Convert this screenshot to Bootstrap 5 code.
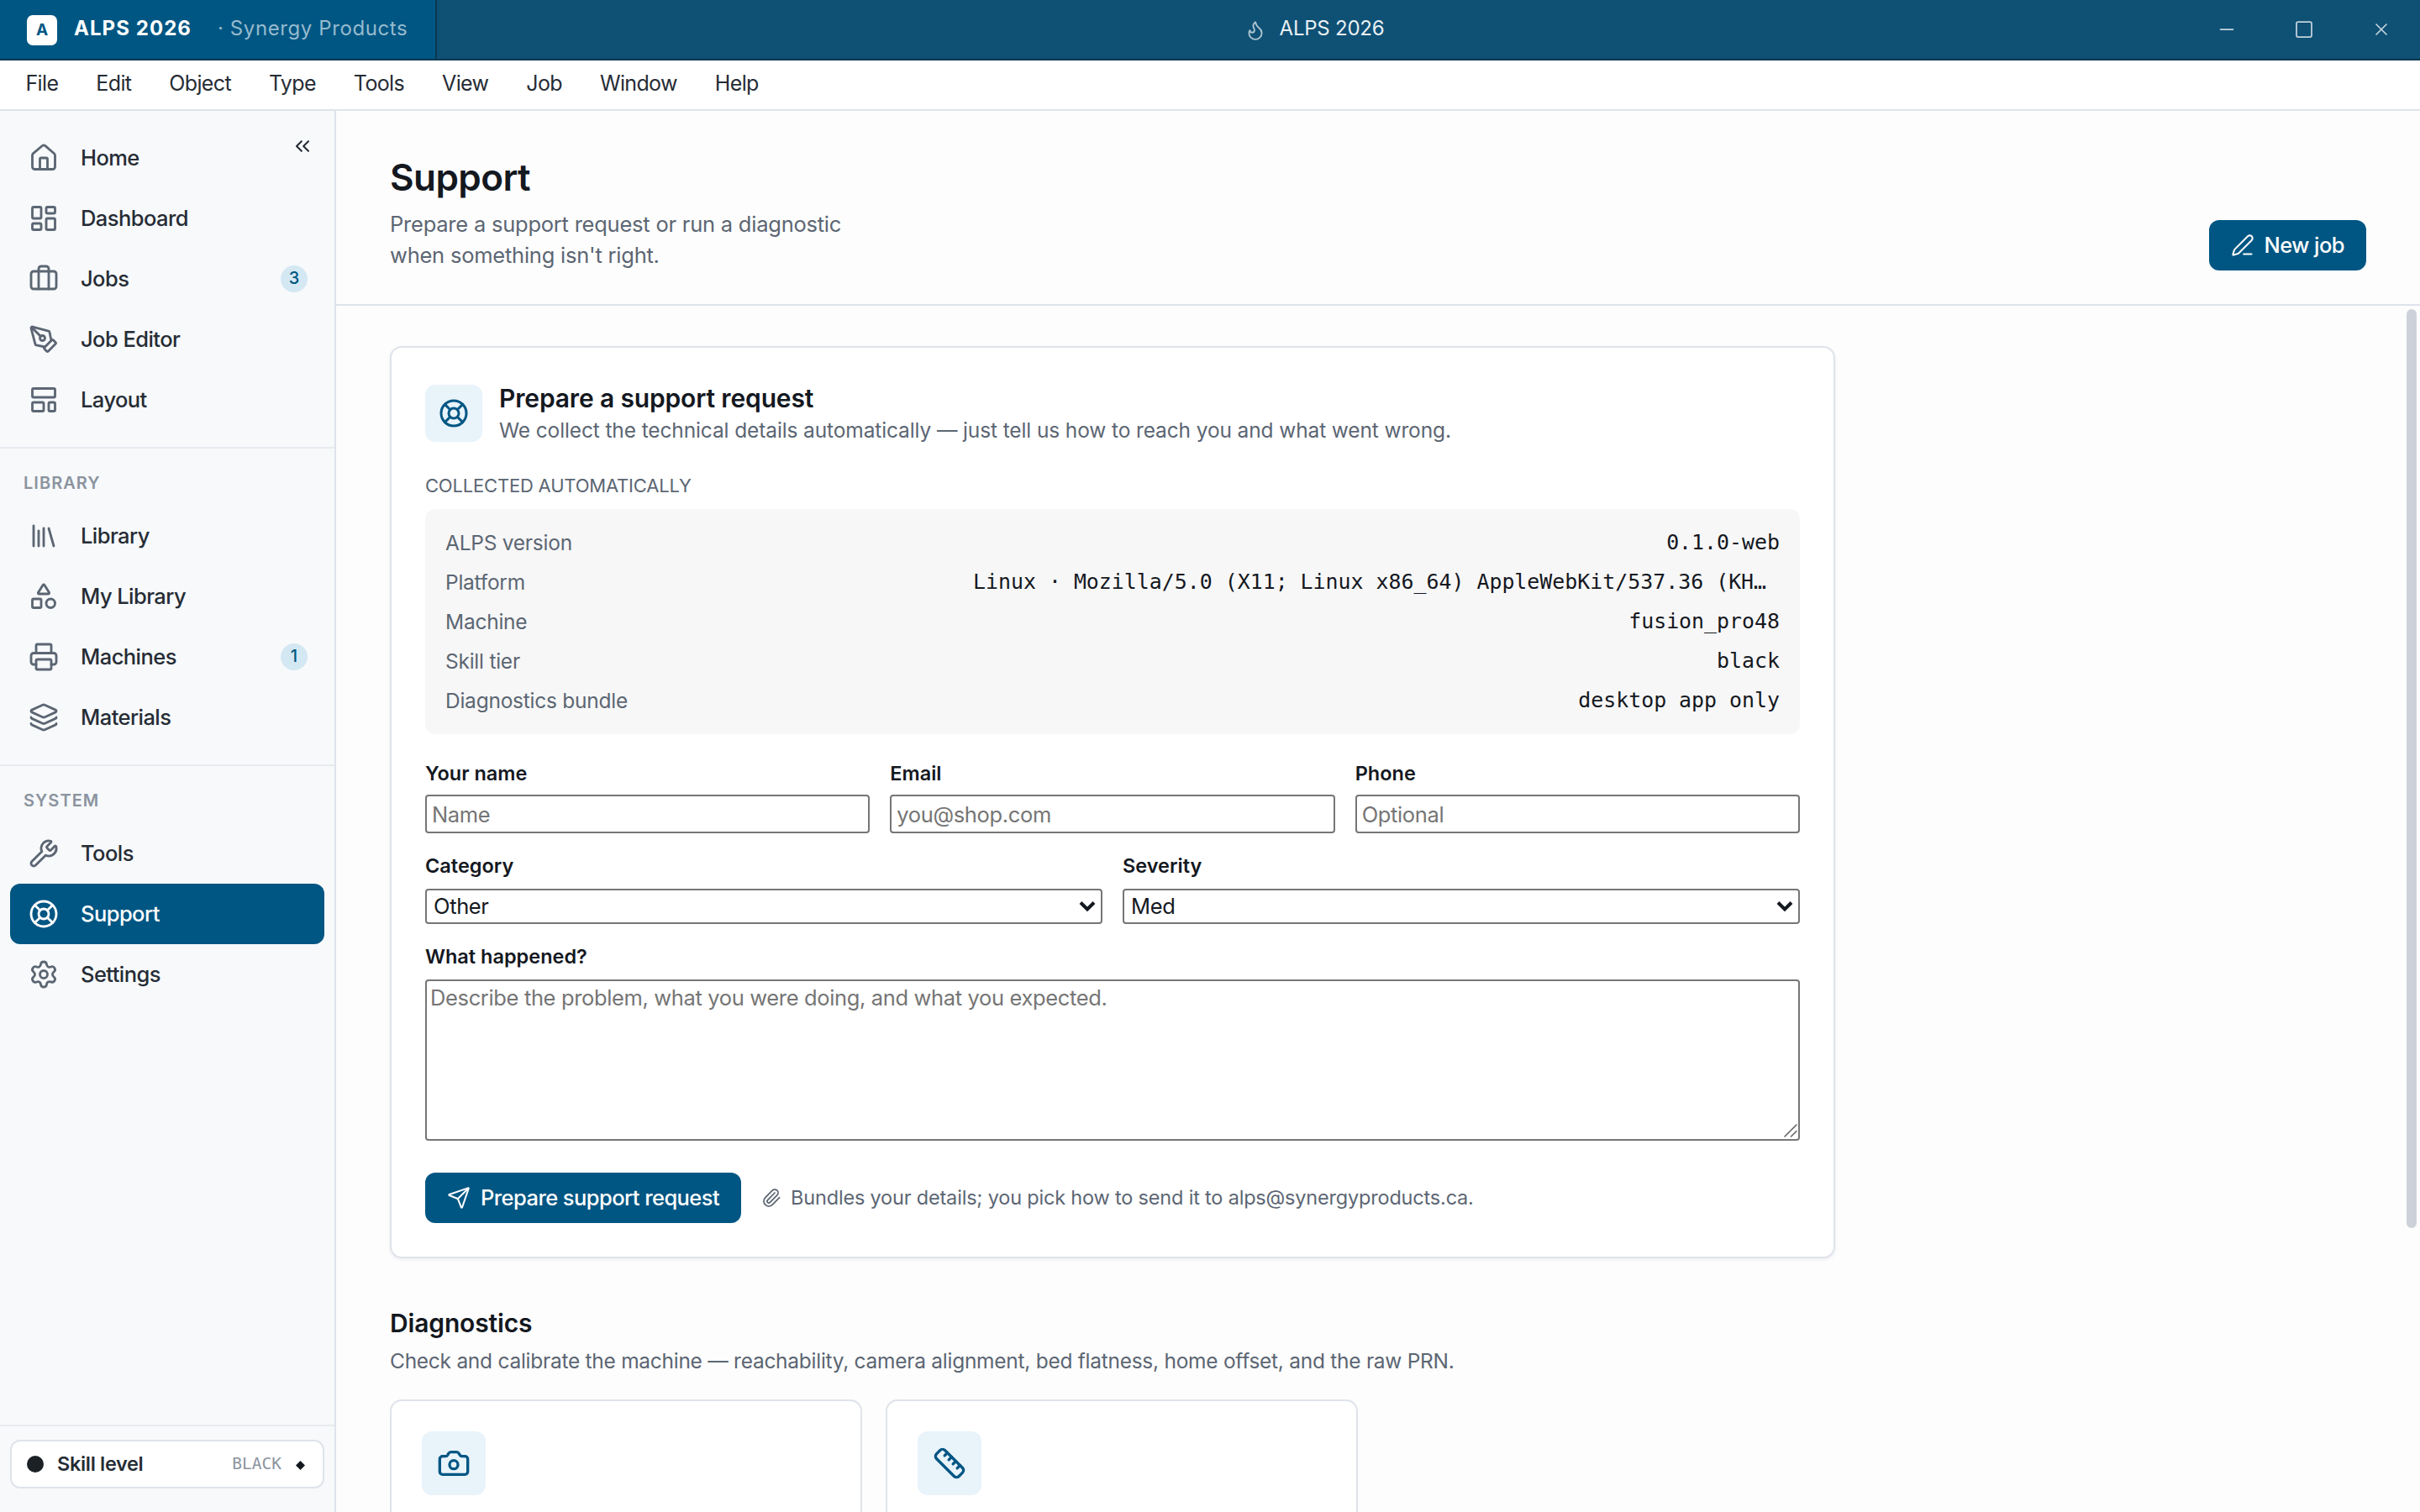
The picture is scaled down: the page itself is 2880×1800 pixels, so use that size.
<!DOCTYPE html>
<html lang="en">
<head>
<meta charset="utf-8">
<meta name="viewport" content="width=device-width, initial-scale=1">
<title>ALPS 2026</title>
<link href="https://cdn.jsdelivr.net/npm/bootstrap@5.3.0/dist/css/bootstrap.min.css" rel="stylesheet">
<style>
:root{--brand:#005683;--bar:#0f5075;--bar-edge:#0a3850;--ink:#14181f;--ink-2:#262c35;--muted-ink:#5c6673;--faint:#8b949e;--line:#dfe3ea;--line-soft:#e8ebef;--tint:#e8f3fa;--mono:"DejaVu Sans Mono",monospace}
body{font-family:Inter,sans-serif;font-size:25.5px;line-height:36px;letter-spacing:-.009em;color:var(--ink);background:#fdfdfd}
svg{fill:none;stroke:currentColor;stroke-width:1.75;stroke-linecap:round;stroke-linejoin:round;flex:none}
.i24{width:24px;height:24px}.i26{width:26px;height:26px}.i28{width:28px;height:28px}.i36{width:36px;height:36px}.i40{width:40px;height:40px}

.titlebar{height:72px;background:var(--bar);border-bottom:2px solid var(--bar-edge);color:#e9f0f4;font-size:24px}
.brand{width:520px;padding-left:32px;padding-bottom:1px;background:var(--brand);border-right:2px solid var(--bar-edge)}
.brand-mark{width:36px;height:36px;border-radius:7px;background:#fff;color:var(--brand);font-size:19px;margin-right:20px;margin-top:2px}
.brand-name{letter-spacing:.044em;color:#fff;margin-right:31px;margin-top:-2px}
.brand-sub{letter-spacing:.025em;color:#96bace;margin-top:-2px}
.win-title{gap:16px;padding-bottom:3px}
.win-title svg{color:#a9c2d0;position:relative;top:2px}
.win-btn{width:92px;color:#c3d3dd}
.win-side{width:276px}
.menubar{height:60px;background:#fff;border-bottom:2px solid var(--line);padding:0 8px;font-size:25px;letter-spacing:-.026em;color:var(--ink-2)}
.menubar a{padding:0 22.5px;color:inherit;text-decoration:none;line-height:54px}

.side{width:400px;background:#f7f9fb;border-right:2px solid var(--line);position:relative}
.nav-group{padding:20px 12px}
.nav-group+.nav-group{border-top:2px solid var(--line-soft);padding-top:22px}
.nav-head{font-size:20px;font-weight:600;letter-spacing:.052em;color:var(--faint);padding-left:16px;height:46px;line-height:38px}
.nav-row{height:72px;padding:0 20px 0 22px;border-radius:12px;color:var(--ink-2);font-weight:500;letter-spacing:-.022em;text-decoration:none;gap:26px}
.nav-row svg{color:var(--muted-ink);stroke-width:1.9}
.nav-row.on{background:var(--brand);color:#fff}
.nav-row.on svg{color:#fff}
.count{min-width:32px;height:32px;border-radius:16px;background:#d3e8f3;color:var(--brand);font-size:20px;line-height:31px;text-align:center;letter-spacing:0}
.fold{position:absolute;top:28px;right:24px;width:28px;height:28px;color:var(--ink-2)}
.side-foot{border-top:2px solid var(--line-soft);padding:16px 12px 28px;height:104px}
.skill{height:58px;border:2px solid var(--line);border-radius:12px;background:#fff;padding:0 21px 0 18px;font-size:23.5px;letter-spacing:-.014em;color:var(--ink-2)}
.dot{width:20px;height:20px;border-radius:50%;background:#1c2126;margin-right:16px}
.tier{font-family:var(--mono);font-size:19.5px;letter-spacing:0;color:var(--faint);margin-right:17px}
.gem{width:11px;height:11px;fill:var(--ink);stroke:none;margin-top:3px}

.page-head{height:232px;padding:52px 64px 40px;border-bottom:2px solid var(--line)}
.page-head h1{font-size:44px;line-height:52px;font-weight:600;letter-spacing:-.013em;margin:0 0 12px}
.page-head p{color:var(--muted-ink);line-height:36.5px;margin:0;width:560px}
.act{height:60px;border:0;border-radius:12px;background:var(--brand);color:#fff;font-size:25.5px;font-weight:500;letter-spacing:-.022em;padding:0 26px;gap:12px}
.page-body{padding:48px 64px 0;position:relative}
.thumb{position:absolute;right:4px;top:4px;width:12px;height:1094px;border-radius:6px;background:#cdd2da}

.panel{width:1720px;background:#fff;border:2px solid var(--line);border-radius:14px;padding:40px;box-shadow:0 2px 4px rgba(20,24,31,.06)}
.tile{width:68px;height:68px;border-radius:12px;background:var(--tint);color:var(--brand)}
.tile svg{stroke-width:2}
.tile.big{width:76px;height:76px}
h2{font-size:30px;line-height:40px;font-weight:600;letter-spacing:-.005em;margin:0}
.note{font-size:24.5px;letter-spacing:-.005em;color:var(--muted-ink)}
.over{font-size:22px;line-height:32px;letter-spacing:-.009em;color:var(--muted-ink);margin:32px 0 12px}
.facts{background:#f7f7f7;border-radius:12px;padding:16px 24px;height:268px;font-size:24.5px;margin:0 0 30px}
.facts div{height:47px}
.facts dt{font-weight:400;color:var(--muted-ink);letter-spacing:-.01em}
.facts dd{margin:0;font-family:var(--mono);font-size:24.9px;letter-spacing:0}
.facts .long{width:960px}

.fields{gap:24px}
.fields+.fields,.fields+.block{margin-top:22px}
.cap{display:block;font-size:23.5px;font-weight:600;letter-spacing:0;line-height:34px;margin-bottom:10px}
.cap.tight{margin-bottom:8px}
.box,.box:focus{display:block;width:100%;border:2px solid #767676;border-radius:4px;background-color:#fff;color:var(--ink);font-size:25.5px;letter-spacing:-.014em;line-height:36px;padding:2px 6px;outline:0;box-shadow:none}
.box::placeholder{color:#757575;opacity:1}
input.box{height:46px}
select.box{height:42px;padding:0 8px;appearance:none;-webkit-appearance:none}
textarea.box{height:192px;padding:2px 4px;resize:none}
.drop{position:absolute;right:8px;top:14px;width:20px;height:14px;color:var(--ink);stroke-width:4;stroke-linecap:butt;stroke-linejoin:miter}
.grip{position:absolute;right:2px;bottom:3px;width:18px;height:18px;color:#666;stroke-width:1.6}
.send-row{margin-top:38px;gap:24px}
.hint{font-size:23.5px;letter-spacing:-.008em;color:var(--muted-ink);gap:11px}

.diag-head{margin-top:57px}
.diag-head p{margin:7px 0 28px;font-size:24.5px;letter-spacing:-.011em;color:var(--muted-ink)}
.diag-list{gap:28px}
.diag{width:562px;height:260px;background:#fff;border:2px solid var(--line);border-radius:14px;padding:36px}
</style>
<script src="https://cdn.jsdelivr.net/npm/bootstrap@5.3.0/dist/js/bootstrap.bundle.min.js"></script>
</head>
<body class="vh-100 overflow-hidden d-flex flex-column">

<svg class="d-none">
  <symbol id="buoy" viewBox="0 0 24 24"><circle cx="12" cy="12" r="10"/><path d="m4.93 4.93 4.24 4.24M14.83 9.17l4.24-4.24M14.83 14.83l4.24 4.24M9.17 14.83l-4.24 4.24"/><circle cx="12" cy="12" r="4"/></symbol>
</svg>

<header class="titlebar d-flex flex-shrink-0">
  <div class="brand d-flex align-items-center">
    <span class="brand-mark d-flex align-items-center justify-content-center fw-bold">A</span>
    <span class="brand-name fw-bold">ALPS 2026</span>
    <span class="brand-sub">· Synergy Products</span>
  </div>
  <div class="win-title flex-grow-1 d-flex align-items-center justify-content-center ps-1">
    <svg class="i26" viewBox="0 0 24 24"><path d="M8.5 14.5A2.5 2.5 0 0 0 11 12c0-1.38-.5-2-1-3-1.072-2.143-.224-4.054 2-6 .5 2.5 2 4.9 4 6.5 2 1.6 3 3.5 3 5.5a7 7 0 1 1-14 0c0-1.153.433-2.294 1-3a2.5 2.5 0 0 0 2.5 2.5z"/></svg>
    <span>ALPS 2026</span>
  </div>
  <div class="win-side d-flex justify-content-end">
    <span class="win-btn d-flex align-items-center justify-content-center"><svg class="i24" viewBox="0 0 24 24"><path d="M4.5 12h15"/></svg></span>
    <span class="win-btn d-flex align-items-center justify-content-center"><svg class="i24" viewBox="0 0 24 24"><rect x="3" y="3" width="18" height="18" rx="2"/></svg></span>
    <span class="win-btn d-flex align-items-center justify-content-center"><svg class="i24" viewBox="0 0 24 24"><path d="M18 6 6 18M6 6l12 12"/></svg></span>
  </div>
</header>

<nav class="menubar d-flex flex-shrink-0">
  <a href="#">File</a><a href="#">Edit</a><a href="#">Object</a><a href="#">Type</a><a href="#">Tools</a><a href="#">View</a><a href="#">Job</a><a href="#">Window</a><a href="#">Help</a>
</nav>

<div class="d-flex flex-grow-1 overflow-hidden">
  <aside class="side d-flex flex-column flex-shrink-0">
    <svg class="fold" viewBox="0 0 24 24"><path d="m11 17-5-5 5-5M18 17l-5-5 5-5"/></svg>
    <div class="nav-group">
      <a class="nav-row d-flex align-items-center" href="#"><svg class="i36" viewBox="0 0 24 24"><path d="M15 21v-8a1 1 0 0 0-1-1h-4a1 1 0 0 0-1 1v8"/><path d="M3 10a2 2 0 0 1 .709-1.528l7-5.999a2 2 0 0 1 2.582 0l7 5.999A2 2 0 0 1 21 10v9a2 2 0 0 1-2 2H5a2 2 0 0 1-2-2z"/></svg><span>Home</span></a>
      <a class="nav-row d-flex align-items-center" href="#"><svg class="i36" viewBox="0 0 24 24"><rect x="3" y="3" width="7" height="9" rx="1"/><rect x="14" y="3" width="7" height="5" rx="1"/><rect x="14" y="12" width="7" height="9" rx="1"/><rect x="3" y="16" width="7" height="5" rx="1"/></svg><span>Dashboard</span></a>
      <a class="nav-row d-flex align-items-center" href="#"><svg class="i36" viewBox="0 0 24 24"><path d="M16 20V4a2 2 0 0 0-2-2h-4a2 2 0 0 0-2 2v16"/><rect x="2" y="6" width="20" height="14" rx="2"/></svg><span>Jobs</span><span class="count ms-auto">3</span></a>
      <a class="nav-row d-flex align-items-center" href="#"><svg class="i36" viewBox="0 0 24 24"><path d="M15.707 21.293a1 1 0 0 1-1.414 0l-1.586-1.586a1 1 0 0 1 0-1.414l5.586-5.586a1 1 0 0 1 1.414 0l1.586 1.586a1 1 0 0 1 0 1.414z"/><path d="m18 13-1.375-6.874a1 1 0 0 0-.746-.776L3.235 2.028a1 1 0 0 0-1.207 1.207L5.35 15.879a1 1 0 0 0 .776.746L13 18M2.3 2.3l7.286 7.286"/><circle cx="11" cy="11" r="2"/></svg><span>Job Editor</span></a>
      <a class="nav-row d-flex align-items-center" href="#"><svg class="i36" viewBox="0 0 24 24"><rect x="3" y="3" width="18" height="7" rx="1"/><rect x="3" y="14" width="9" height="7" rx="1"/><rect x="16" y="14" width="5" height="7" rx="1"/></svg><span>Layout</span></a>
    </div>
    <div class="nav-group">
      <div class="nav-head">LIBRARY</div>
      <a class="nav-row d-flex align-items-center" href="#"><svg class="i36" viewBox="0 0 24 24"><path d="m16 6 4 14M12 6v14M8 8v12M4 4v16"/></svg><span>Library</span></a>
      <a class="nav-row d-flex align-items-center" href="#"><svg class="i36" viewBox="0 0 24 24"><path d="M8.3 10a.7.7 0 0 1-.626-1.079L11.4 3a.7.7 0 0 1 1.198-.043L16.3 8.9a.7.7 0 0 1-.572 1.1Z"/><rect x="3" y="14" width="7" height="7" rx="1"/><circle cx="17.5" cy="17.5" r="3.5"/></svg><span>My Library</span></a>
      <a class="nav-row d-flex align-items-center" href="#"><svg class="i36" viewBox="0 0 24 24"><path d="M6 18H4a2 2 0 0 1-2-2v-5a2 2 0 0 1 2-2h16a2 2 0 0 1 2 2v5a2 2 0 0 1-2 2h-2"/><path d="M6 9V3a1 1 0 0 1 1-1h10a1 1 0 0 1 1 1v6"/><rect x="6" y="14" width="12" height="8" rx="1"/></svg><span>Machines</span><span class="count ms-auto">1</span></a>
      <a class="nav-row d-flex align-items-center" href="#"><svg class="i36" viewBox="0 0 24 24"><path d="M12.83 2.18a2 2 0 0 0-1.66 0L2.6 6.08a1 1 0 0 0 0 1.83l8.58 3.91a2 2 0 0 0 1.66 0l8.58-3.9a1 1 0 0 0 0-1.83z"/><path d="M2 12a1 1 0 0 0 .58.91l8.6 3.91a2 2 0 0 0 1.65 0l8.58-3.9A1 1 0 0 0 22 12"/><path d="M2 17a1 1 0 0 0 .58.91l8.6 3.91a2 2 0 0 0 1.65 0l8.58-3.9A1 1 0 0 0 22 17"/></svg><span>Materials</span></a>
    </div>
    <div class="nav-group">
      <div class="nav-head">SYSTEM</div>
      <a class="nav-row d-flex align-items-center" href="#"><svg class="i36" viewBox="0 0 24 24"><path d="M14.7 6.3a1 1 0 0 0 0 1.4l1.6 1.6a1 1 0 0 0 1.4 0l3.106-3.105c.32-.322.863-.22.983.218a6 6 0 0 1-8.259 7.057l-7.91 7.91a1 1 0 0 1-2.999-3l7.91-7.91a6 6 0 0 1 7.057-8.259c.438.12.54.662.219.984z"/></svg><span>Tools</span></a>
      <a class="nav-row on d-flex align-items-center" href="#"><svg class="i36"><use href="#buoy"/></svg><span>Support</span></a>
      <a class="nav-row d-flex align-items-center" href="#"><svg class="i36" viewBox="0 0 24 24"><path d="M9.671 4.136a2.34 2.34 0 0 1 4.659 0 2.34 2.34 0 0 0 3.319 1.915 2.34 2.34 0 0 1 2.33 4.033 2.34 2.34 0 0 0 0 3.831 2.34 2.34 0 0 1-2.33 4.033 2.34 2.34 0 0 0-3.319 1.915 2.34 2.34 0 0 1-4.659 0 2.34 2.34 0 0 0-3.32-1.915 2.34 2.34 0 0 1-2.33-4.033 2.34 2.34 0 0 0 0-3.831A2.34 2.34 0 0 1 6.35 6.051a2.34 2.34 0 0 0 3.319-1.915"/><circle cx="12" cy="12" r="3"/></svg><span>Settings</span></a>
    </div>
    <div class="side-foot mt-auto">
      <div class="skill d-flex align-items-center">
        <span class="dot"></span><span class="fw-semibold">Skill level</span>
        <span class="tier ms-auto">BLACK</span><svg class="gem" viewBox="0 0 12 12"><path d="M6 0l6 6-6 6-6-6z"/></svg>
      </div>
    </div>
  </aside>

  <main class="flex-grow-1 d-flex flex-column overflow-hidden">
    <div class="page-head d-flex justify-content-between align-items-end flex-shrink-0">
      <div>
        <h1>Support</h1>
        <p>Prepare a support request or run a diagnostic<br>when something isn't right.</p>
      </div>
      <button class="act btn d-flex align-items-center" type="button"><svg class="i28" viewBox="0 0 24 24"><path d="M13 21h8"/><path d="M21.174 6.812a1 1 0 0 0-3.986-3.987L3.842 16.174a2 2 0 0 0-.5.83l-1.321 4.352a.5.5 0 0 0 .623.622l4.353-1.32a2 2 0 0 0 .83-.497z"/></svg>New job</button>
    </div>

    <div class="page-body flex-grow-1 overflow-hidden">
      <div class="thumb"></div>
      <section class="panel">
        <div class="d-flex align-items-center">
          <span class="tile d-flex align-items-center justify-content-center flex-shrink-0"><svg class="i36"><use href="#buoy"/></svg></span>
          <div class="ms-3 ps-1">
            <h2>Prepare a support request</h2>
            <div class="note">We collect the technical details automatically — just tell us how to reach you and what went wrong.</div>
          </div>
        </div>

        <div class="over">COLLECTED AUTOMATICALLY</div>
        <dl class="facts">
          <div class="d-flex justify-content-between align-items-center"><dt>ALPS version</dt><dd>0.1.0-web</dd></div>
          <div class="d-flex justify-content-between align-items-center"><dt>Platform</dt><dd class="long">Linux · Mozilla/5.0 (X11; Linux x86_64) AppleWebKit/537.36 (KH…</dd></div>
          <div class="d-flex justify-content-between align-items-center"><dt>Machine</dt><dd>fusion_pro48</dd></div>
          <div class="d-flex justify-content-between align-items-center"><dt>Skill tier</dt><dd>black</dd></div>
          <div class="d-flex justify-content-between align-items-center"><dt>Diagnostics bundle</dt><dd>desktop app only</dd></div>
        </dl>

        <div class="fields d-flex">
          <label class="w-100"><span class="cap tight">Your name</span><input class="box" type="text" placeholder="Name"></label>
          <label class="w-100"><span class="cap tight">Email</span><input class="box" type="email" placeholder="you@shop.com"></label>
          <label class="w-100"><span class="cap tight">Phone</span><input class="box" type="tel" placeholder="Optional"></label>
        </div>
        <div class="fields d-flex">
          <label class="w-100"><span class="cap">Category</span><span class="d-block position-relative"><select class="box"><option>Other</option></select><svg class="drop" viewBox="0 0 20 14"><path d="m2 2.500 8 8 8-8"/></svg></span></label>
          <label class="w-100"><span class="cap">Severity</span><span class="d-block position-relative"><select class="box"><option>Med</option></select><svg class="drop" viewBox="0 0 20 14"><path d="m2 2.500 8 8 8-8"/></svg></span></label>
        </div>
        <label class="block d-block"><span class="cap">What happened?</span><span class="d-block position-relative"><textarea class="box" placeholder="Describe the problem, what you were doing, and what you expected."></textarea><svg class="grip" viewBox="0 0 18 18"><path d="M2 16 16 2M9.500 16l6.500-6.500"/></svg></span></label>

        <div class="send-row d-flex align-items-center">
          <button class="act btn d-flex align-items-center" type="button"><svg class="i28" viewBox="0 0 24 24"><path d="M14.536 21.686a.5.5 0 0 0 .937-.024l6.5-19a.496.496 0 0 0-.635-.635l-19 6.5a.5.5 0 0 0-.024.937l7.93 3.18a2 2 0 0 1 1.112 1.11z"/><path d="m21.854 2.147-10.94 10.939"/></svg>Prepare support request</button>
          <span class="hint d-flex align-items-center"><svg class="i24" viewBox="0 0 24 24"><path d="m16 6-8.414 8.586a2 2 0 0 0 2.829 2.829l8.414-8.586a4 4 0 1 0-5.657-5.657l-8.379 8.551a6 6 0 1 0 8.485 8.485l8.379-8.551"/></svg>Bundles your details; you pick how to send it to alps@synergyproducts.ca.</span>
        </div>
      </section>

      <section class="diag-head">
        <h2>Diagnostics</h2>
        <p>Check and calibrate the machine — reachability, camera alignment, bed flatness, home offset, and the raw PRN.</p>
        <div class="diag-list d-flex">
          <div class="diag"><span class="tile big d-flex align-items-center justify-content-center"><svg class="i40" viewBox="0 0 24 24"><path d="M13.997 4a2 2 0 0 1 1.76 1.05l.486.9A2 2 0 0 0 18.003 7H20a2 2 0 0 1 2 2v9a2 2 0 0 1-2 2H4a2 2 0 0 1-2-2V9a2 2 0 0 1 2-2h1.997a2 2 0 0 0 1.759-1.048l.489-.904A2 2 0 0 1 10.004 4z"/><circle cx="12" cy="13" r="3"/></svg></span></div>
          <div class="diag"><span class="tile big d-flex align-items-center justify-content-center"><svg class="i40" viewBox="0 0 24 24"><path d="M21.300 15.300a2.400 2.400 0 0 1 0 3.400l-2.600 2.600a2.400 2.400 0 0 1-3.400 0L2.700 8.700a2.410 2.410 0 0 1 0-3.400l2.600-2.600a2.410 2.410 0 0 1 3.400 0Z"/><path d="m14.500 12.500 2-2M11.500 9.500l2-2M8.500 6.500l2-2M17.500 15.500l2-2"/></svg></span></div>
        </div>
      </section>
    </div>
  </main>
</div>
</body>
</html>
